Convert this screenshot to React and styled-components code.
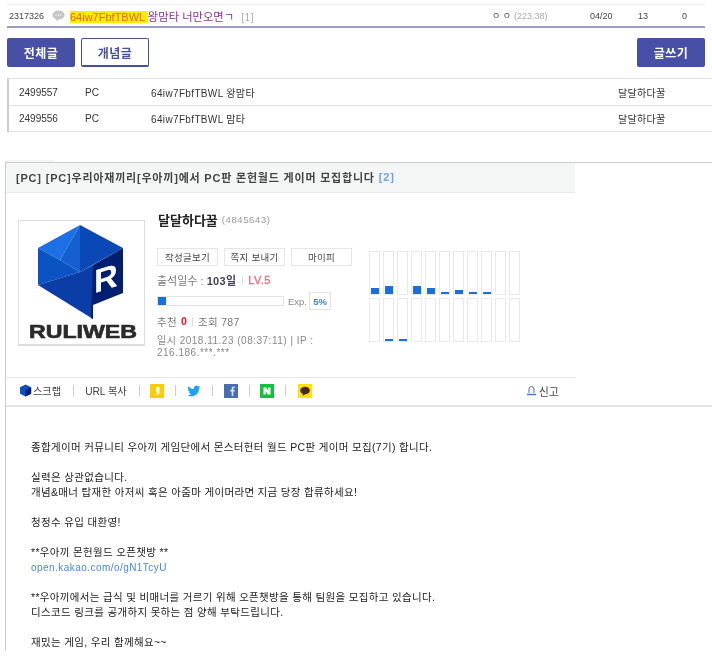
import React from "react";
import styled, { createGlobalStyle } from "styled-components";

const Global = createGlobalStyle`
  html, body { margin: 0; padding: 0; background: #fff; }
  body { width: 712px; height: 663px; overflow: hidden; font-family: "Liberation Sans", "Noto Sans CJK KR", sans-serif; color: #333; }
  * { box-sizing: border-box; }
`;
const Page = styled.div`
  padding-top: 4px;
  filter: blur(0.35px);
`;
const ListRow = styled.div`
  margin: 0 7px;
  height: 24px;
  border-top: 1px solid #eee;
  border-bottom: 2px solid #9c9cc9;
  display: flex;
  align-items: center;
  font-size: 9px;
  color: #444;
`;
const ListId = styled.span`
  margin-left: 2px;
  width: 43px;
`;
const Bubble = styled.svg`
  width: 13px;
  height: 12px;
  margin-right: 5px;
`;
const ListTitle = styled.span`
  flex: 1;
  font-size: 11.3px;
  color: #8c2f9c;
  white-space: nowrap;
`;
const Mark = styled.span`
  background: #ffee00;
  color: #e8641c;
  font-size: 11px;
`;
const Reply = styled.span`
  color: #aaa;
  font-size: 10px;
  margin-left: 7px;
  letter-spacing: 0.6px;
`;
const ListCell = styled.span`
  width: ${(p) => p.$w}px;
  color: ${(p) => p.$c || "#444"};
  flex: none;
  white-space: nowrap;
`;
const ButtonBar = styled.div`
  margin: 10px 7px 0;
  display: flex;
  gap: 6px;
`;
const Btn = styled.div`
  width: 68px;
  height: 29px;
  border-radius: 2px;
  display: flex;
  align-items: center;
  justify-content: center;
  font-size: 12px;
  font-weight: 700;
  letter-spacing: 0.5px;
  background: ${(p) => (p.$outline ? "#fff" : "#4750a6")};
  color: ${(p) => (p.$outline ? "#46509f" : "#fff")};
  border: 1px solid #46509f;
  border-bottom-width: 2px;
  margin-left: ${(p) => (p.$push ? "auto" : "0")};
`;
const MiniTable = styled.div`
  margin: 11px 0 0 7px;
  border-left: 2px solid #ccc;
  border-top: 1px solid #e2e2e2;
`;
const MiniRow = styled.div`
  height: ${(p) => p.$h}px;
  border-bottom: 1px solid #e2e2e2;
  display: grid;
  grid-template-columns: 66px 66px 467px 1fr;
  padding-left: 10px;
  align-items: center;
  font-size: 10px;
  color: #333;
`;
const MiniTitle = styled.span`
  letter-spacing: 0.35px;
`;
const Author = styled.span`
  letter-spacing: 0.3px;
`;
const PostTab = styled.div`
  margin: 28px 0 0 5px;
  width: 50px;
  height: 2px;
  background: #f3f3f3;
`;
const Post = styled.div`
  margin: 0 0 0 5px;
  border-left: 1px solid #ccc;
  border-top: 1px solid #ccc;
`;
const TitleBar = styled.div`
  width: 569px;
  height: 30px;
  background: #f4f6f6;
  border-bottom: 1px solid #e8e8e8;
  padding: 0 0 2px 10px;
  display: flex;
  align-items: center;
  font-size: 11px;
  font-weight: 700;
  color: #444;
  letter-spacing: 0.8px;
  white-space: nowrap;
`;
const Count = styled.span`
  color: #6f9fe6;
  margin-left: 4px;
`;
const Profile = styled.div`
  width: 569px;
  height: 184px;
  padding: 27px 0 0 12px;
  display: flex;
`;
const Avatar = styled.div`
  width: 127px;
  height: 126px;
  border: 1px solid #ddd;
  border-bottom-width: 2px;
  flex: none;
`;
const LogoSvg = styled.svg`
  display: block;
  width: 125px;
  height: 123px;
`;
const Info = styled.div`
  margin-left: 12px;
  width: 200px;
  flex: none;
  font-size: 11px;
  color: #777;
`;
const NameLine = styled.div`
  height: 14px;
  margin-top: -8px;
  padding-left: 1px;
  display: flex;
  align-items: center;
  gap: 4px;
  white-space: nowrap;
`;
const Name = styled.span`
  font-size: 13px;
  font-weight: 700;
  color: #222;
`;
const Uid = styled.span`
  font-size: 9.5px;
  color: #999;
  letter-spacing: 0.6px;
`;
const MiniBtns = styled.div`
  margin-top: 22px;
  display: flex;
  gap: 6px;
`;
const MiniBtn = styled.div`
  width: 61px;
  height: 18px;
  border: 1px solid #e6e6e6;
  display: flex;
  align-items: center;
  justify-content: center;
  font-size: 9.5px;
  letter-spacing: 0.3px;
  color: #444;
  white-space: nowrap;
`;
const Attend = styled.div`
  margin-top: 7px;
  height: 14px;
  display: flex;
  align-items: center;
  white-space: nowrap;
`;
const Days = styled.b`
  color: #444060;
  margin-right: 6px;
  letter-spacing: 0.3px;
`;
const Sep = styled.i`
  display: inline-block;
  width: 1px;
  height: 9px;
  background: #ddd;
  margin: 0 5px 0 0;
`;
const Level = styled.b`
  color: #f0697c;
  font-weight: 400;
  letter-spacing: 0.4px;
  -webkit-text-stroke: 0.3px #f0697c;
`;
const ExpLine = styled.div`
  margin-top: 5px;
  height: 18px;
  display: flex;
  align-items: center;
`;
const Track = styled.div`
  width: 127px;
  height: 10px;
  border: 1px solid #e2e2e2;
  background: #fff;
`;
const Fill = styled.div`
  height: 100%;
  background: #1a6fdf;
`;
const ExpLabel = styled.span`
  margin-left: 4px;
  font-size: 9.5px;
  color: #888;
`;
const ExpPct = styled.span`
  margin-left: 2px;
  width: 22px;
  height: 18px;
  border: 1px solid #e2e2e2;
  color: #3b7de0;
  font-weight: 700;
  font-size: 9.5px;
  display: flex;
  align-items: center;
  justify-content: center;
`;
const StatLine = styled.div`
  margin-top: 4px;
  height: 14px;
  display: flex;
  align-items: center;
  white-space: nowrap;
  font-size: 10.5px;
  letter-spacing: 0.3px;
`;
const Zero = styled.b`
  color: #f01030;
  margin: 0 5px 0 4px;
`;
const DateLine = styled.div`
  margin-top: 7px;
  line-height: 12px;
  font-size: 10px;
  width: 170px;
  letter-spacing: 0.5px;
  color: #888;
`;
const Charts = styled.div`
  margin: 31px 0 0 12px;
  display: grid;
  grid-template-columns: repeat(11, 11px);
  grid-auto-rows: 44px;
  column-gap: 3px;
  row-gap: 3px;
  align-content: start;
`;
const Bar = styled.div`
  border: 1.5px solid #e9e9e9;
  display: flex;
  align-items: flex-end;
  padding: 0 0.5px;
`;
const BarFill = styled.div`
  width: 100%;
  background: #1a6fdf;
`;
const ActionBar = styled.div`
  border-bottom: 2px solid #e2e2e2;
  height: 30px;
`;
const Actions = styled.div`
  width: 569px;
  height: 28px;
  border-top: 1px solid #e6e6e6;
  padding: 0 0 2px 14px;
  display: flex;
  align-items: center;
  font-size: 10.2px;
  color: #444;
`;
const Divider = styled.i`
  width: 1px;
  height: 11px;
  background: #ccc;
  margin: 0 ${(p) => p.$r ?? 11}px 0 ${(p) => p.$l ?? 11}px;
`;
const Scrap = styled.span`
  display: flex;
  align-items: center;
  white-space: nowrap;
`;
const ShareIcon = styled.svg`
  width: 14px;
  height: 14px;
  flex: none;
  display: block;
`;
const ScrapIcon = styled(ShareIcon)`
  width: 13px;
`;
const Report = styled.span`
  margin-left: auto;
  margin-right: 16px;
  display: flex;
  align-items: center;
  gap: 3px;
  font-size: 11px;
  color: #444;
`;
const Body = styled.div`
  padding: 33px 0 0 25px;
  font-size: 10.5px;
  line-height: 15px;
  color: #222;
  white-space: nowrap;
  letter-spacing: 0.33px;
`;
const Line = styled.div`
  min-height: 15px;
`;
const KakaoLink = styled.span`
  color: #4a86e0;
  letter-spacing: 0.45px;
  font-size: 10px;
`;

const topBars = [6, 8, 0, 8, 6, 2, 4, 2, 2, 0, 0];
const botBars = [0, 2, 2, 0, 0, 0, 0, 0, 0, 0, 0];

const Logo = () => (
  <LogoSvg viewBox="0 0 125 123">
    <polygon points="19,27 61,4 41,39" fill="#1c6fe4" />
    <polygon points="61,4 41,39 61,51" fill="#1560d0" />
    <polygon points="61,4 104,27 61,51" fill="#0a48b8" />
    <polygon points="19,27 41,39 61,51 19,64" fill="#0b52c4" />
    <polygon points="19,64 61,51 74,44 74,98" fill="#0a3da6" />
    <polygon points="74,44 104,27 104,72 74,84 74,98 72,97" fill="#001f70" />
    <text x="75" y="73" fontFamily="Liberation Sans" fontWeight="700" fontSize="33" fill="#fff" transform="skewY(-18) translate(0 24)">R</text>
    <text x="64" y="117" textAnchor="middle" fontFamily="Liberation Sans" fontWeight="700" fontSize="18" textLength="108" lengthAdjust="spacingAndGlyphs" fill="#2a2a2a" stroke="#2a2a2a" strokeWidth="0.6">RULIWEB</text>
  </LogoSvg>
);

const Y = () => (
  <ShareIcon viewBox="0 0 14 14"><rect width="14" height="14" fill="#ffcc00" /><path d="M6 3h3.500v4.500c0 2-1 3.300-3 3.800l-.5-1.200c1-.4 1.400-1 1.400-1.800H6z" fill="#fff" /></ShareIcon>
);
const T = () => (
  <ShareIcon viewBox="0 0 24 24"><path fill="#1da1f2" d="M23 5c-.8.4-1.700.6-2.600.7 1-.6 1.700-1.400 2-2.500-.9.5-1.900.9-2.900 1.100A4.600 4.600 0 0 0 11.600 8.500C7.800 8.300 4.400 6.500 2.100 3.700c-1.200 2.100-.6 4.800 1.400 6.100-.7 0-1.400-.2-2-.6 0 2.200 1.600 4.100 3.700 4.600-.7.200-1.400.2-2.100.1.600 1.900 2.300 3.200 4.300 3.200A9.300 9.300 0 0 1 .6 19a13 13 0 0 0 20-11.600c.9-.6 1.700-1.400 2.400-2.400z" /></ShareIcon>
);
const F = () => (
  <ShareIcon viewBox="0 0 14 14"><rect width="14" height="14" fill="#4a6fb0" /><path d="M7.700 12V7.500H6.300V5.800h1.400V4.600C7.700 3.200 8.500 2.500 9.700 2.500h1v1.600h-.7c-.6 0-.8.300-.8.800v.9h1.500l-.2 1.700H9.200V12z" fill="#dfe6f3" /></ShareIcon>
);
const N = () => (
  <ShareIcon viewBox="0 0 14 14"><rect width="14" height="14" fill="#13c23c" /><path d="M3.500 3.500h2.600l2.200 3.300V3.500h2.200v7H7.900L5.700 7.200v3.300H3.500z" fill="#fff" /></ShareIcon>
);
const K = () => (
  <ShareIcon viewBox="0 0 14 14"><rect width="14" height="14" fill="#ffe400" /><ellipse cx="7" cy="6.500" rx="4.800" ry="3.800" fill="#4a2a20" /><path d="M5 9.500L4.500 12l3-2z" fill="#4a2a20" /></ShareIcon>
);

export default function App() {
  return (
    <Page>
      <Global />
      <ListRow>
        <ListId>2317326</ListId>
        <Bubble viewBox="0 0 13 12">
          <path d="M6.500.5C3 .5.500 2.500.500 5c0 2 1.500 3.500 3.500 4.200L5 11.500l1.500-2c3.500 0 6-2 6-4.500S10 .5 6.500.5z" fill="#c6c6c6" />
          <circle cx="4" cy="5" r=".7" fill="#fff" /><circle cx="6.500" cy="5" r=".7" fill="#fff" /><circle cx="9" cy="5" r=".7" fill="#fff" />
        </Bubble>
        <ListTitle><Mark>64iw7FbfTBWL </Mark>왕맘타 너만오면ㄱ<Reply>[1]</Reply></ListTitle>
        <ListCell $w={22}>ㅇ ㅇ</ListCell>
        <ListCell $w={76} $c="#aaa">(223.38)</ListCell>
        <ListCell $w={48}>04/20</ListCell>
        <ListCell $w={44}>13</ListCell>
        <ListCell $w={23}>0</ListCell>
      </ListRow>
      <ButtonBar>
        <Btn>전체글</Btn>
        <Btn $outline>개념글</Btn>
        <Btn $push>글쓰기</Btn>
      </ButtonBar>
      <MiniTable>
        <MiniRow $h={27}><span>2499557</span><span>PC</span><MiniTitle>64iw7FbfTBWL 왕맘타</MiniTitle><Author>달달하다꿀</Author></MiniRow>
        <MiniRow $h={26}><span>2499556</span><span>PC</span><MiniTitle>64iw7FbfTBWL 맘타</MiniTitle><Author>달달하다꿀</Author></MiniRow>
      </MiniTable>
      <PostTab />
      <Post>
        <TitleBar>[PC] [PC]우리아재끼리[우아끼]에서 PC판 몬헌월드 게이머 모집합니다<Count>[2]</Count></TitleBar>
        <Profile>
          <Avatar><Logo /></Avatar>
          <Info>
            <NameLine><Name>달달하다꿀</Name><Uid>(4845643)</Uid></NameLine>
            <MiniBtns><MiniBtn>작성글보기</MiniBtn><MiniBtn>쪽지 보내기</MiniBtn><MiniBtn>마이피</MiniBtn></MiniBtns>
            <Attend>출석일수 :&nbsp;<Days>103일</Days><Sep /><Level>LV.5</Level></Attend>
            <ExpLine><Track><Fill style={{ width: "6%" }} /></Track><ExpLabel>Exp.</ExpLabel><ExpPct>5%</ExpPct></ExpLine>
            <StatLine>추천<Zero>0</Zero><Sep />조회 787</StatLine>
            <DateLine>일시 2018.11.23 (08:37:11) | IP : 216.186.***.***</DateLine>
          </Info>
          <Charts>
            {[...topBars, ...botBars].map((h, i) => (
              <Bar key={i}>{h > 0 && <BarFill style={{ height: h }} />}</Bar>
            ))}
          </Charts>
        </Profile>
        <ActionBar>
          <Actions>
            <Scrap>
              <ScrapIcon viewBox="0 0 14 14"><polygon points="6,0 12,3 12,10 6,13 0,10 0,3" fill="#0c4fc0" /><polygon points="6,6 12,3 12,10 6,13" fill="#001f70" /></ScrapIcon>
              스크랩
            </Scrap>
            <Divider $l={12} />
            URL 복사
            <Divider $l={12} $r={10} />
            <Y /><Divider />
            <T /><Divider />
            <F /><Divider $r={10} />
            <N /><Divider $r={12} />
            <K />
            <Report>
              <svg width="9" height="11" viewBox="0 0 9 11"><path d="M2 8V4a2.500 2.500 0 0 1 5 0v4" fill="none" stroke="#5a6a90" strokeWidth="1" /><path d="M0 9.500h9" stroke="#3b7de0" strokeWidth="1.500" /></svg>
              신고
            </Report>
          </Actions>
        </ActionBar>
        <Body>
          <Line>종합게이머 커뮤니티 우아끼 게임단에서 몬스터헌터 월드 PC판 게이머 모집(7기) 합니다.</Line>
          <Line />
          <Line>실력은 상관없습니다.</Line>
          <Line>개념&매너 탑재한 아저씨 혹은 아줌마 게이머라면 지금 당장 합류하세요!</Line>
          <Line />
          <Line>청정수 유입 대환영!</Line>
          <Line />
          <Line>**우아끼 몬헌월드 오픈챗방 **</Line>
          <Line><KakaoLink>open.kakao.com/o/gN1TcyU</KakaoLink></Line>
          <Line />
          <Line>**우아끼에서는 급식 및 비매너를 거르기 위해 오픈챗방을 통해 팀원을 모집하고 있습니다.</Line>
          <Line>디스코드 링크를 공개하지 못하는 점 양해 부탁드립니다.</Line>
          <Line />
          <Line>재밌는 게임, 우리 함께해요~~</Line>
        </Body>
      </Post>
    </Page>
  );
}
